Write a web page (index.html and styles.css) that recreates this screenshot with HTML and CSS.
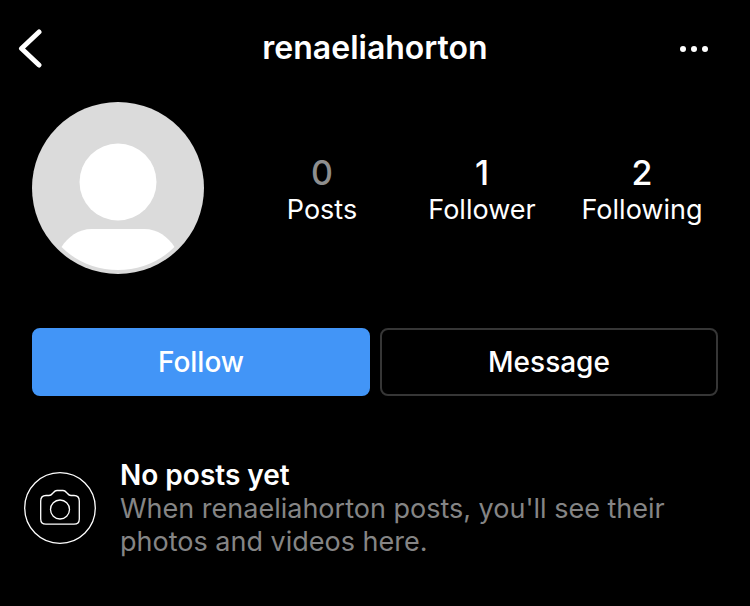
FILE: index.html
```html
<!DOCTYPE html>
<html lang="en">
<head>
  <meta charset="UTF-8" />
  <meta name="viewport" content="width=device-width, initial-scale=1" />
  <title>renaeliahorton</title>
  <link rel="stylesheet" href="styles.css">
</head>
<body>
  <header class="topbar">
    <button type="button" class="icon-btn" aria-label="Back">
      <svg width="28" height="40" viewBox="0 0 28 40">
        <path d="M22 4L4.500 20.500l17.500 16.500" fill="none" stroke="#fff" stroke-width="5" stroke-linecap="round" stroke-linejoin="round"/>
      </svg>
    </button>
    <h1 class="username">renaeliahorton</h1>
    <button type="button" class="icon-btn more" aria-label="More options">
      <svg width="30" height="10" viewBox="0 0 30 10">
        <g fill="#fff">
          <circle cx="4" cy="6" r="3"/>
          <circle cx="15" cy="6" r="3"/>
          <circle cx="26" cy="6" r="3"/>
        </g>
      </svg>
    </button>
  </header>

  <main>
    <section class="profile">
      <svg class="avatar" viewBox="0 0 172 172" role="img" aria-label="Profile picture">
        <circle cx="86" cy="86" r="86" fill="#dbdbdb"/>
        <circle cx="86" cy="80" r="38.5" fill="#fff"/>
        <path d="M29.5 145C36 135 46 127 60 127H112C126 127 136 135 142.5 145C127 160.5 107 168 86 168S45 160.5 29.5 145Z" fill="#fff"/>
      </svg>
      <div class="stats">
        <a href="#" class="stat">
          <span class="count empty">0</span>
          <span class="label">Posts</span>
        </a>
        <a href="#" class="stat">
          <span class="count">1</span>
          <span class="label">Follower</span>
        </a>
        <a href="#" class="stat">
          <span class="count">2</span>
          <span class="label">Following</span>
        </a>
      </div>
    </section>

    <div class="actions">
      <button type="button" class="btn follow">Follow</button>
      <button type="button" class="btn message">Message</button>
    </div>

    <section class="no-posts">
      <svg class="camera" viewBox="0 0 72 72" fill="none" stroke="#fff" stroke-width="1.3">
        <circle cx="36" cy="36" r="35.3"/>
        <path d="M22 23.5H25Q27 23.5 28.5 21.5L29.5 20.5Q31 18.5 33 18.5H39Q41 18.5 42.5 20.5L43.5 21.5Q45 23.5 47 23.5H50Q55.3 23.5 55.3 29V47Q55.3 52.2 50 52.2H22Q16.7 52.2 16.7 47V29Q16.7 23.5 22 23.5Z"/>
        <circle cx="36" cy="37.5" r="9.5"/>
      </svg>
      <div class="no-posts-text">
        <h2>No posts yet</h2>
        <p>When renaeliahorton posts, you'll see their photos and videos here.</p>
      </div>
    </section>
  </main>
</body>
</html>
```

FILE: styles.css
```css
body {
  margin: 0;
  background-color: #000;
  color: #fff;
  font-family: Inter, "Liberation Sans", sans-serif;
  font-size: 27px;
}
button {
  font-family: inherit;
  cursor: pointer;
}
.topbar {
  display: grid;
  grid-template-columns: 60px 1fr 60px;
  align-items: center;
  height: 96px;
  padding: 0 17px;
}
.icon-btn {
  display: flex;
  padding: 0;
  border: none;
  background: none;
}
.more {
  justify-content: flex-end;
  padding: 16px 24px 16px 0;
}
.username {
  margin: 0;
  font-size: 32px;
  font-weight: 600;
  line-height: 40px;
  text-align: center;
}
.profile {
  display: flex;
  align-items: center;
  gap: 38px;
  padding: 6px 28px 0 32px;
}
.avatar {
  flex: none;
  width: 172px;
  height: 172px;
}
.stats {
  flex: 1;
  display: grid;
  grid-template-columns: repeat(3, 1fr);
  padding-top: 4px;
}
.stat {
  display: flex;
  flex-direction: column;
  align-items: center;
  color: #fff;
  text-decoration: none;
}
.count {
  font-size: 34px;
  font-weight: 500;
  line-height: 40px;
}
.empty {
  color: #8e8e8e;
}
.label {
  line-height: 34px;
}
.actions {
  display: grid;
  grid-template-columns: 1fr 1fr;
  gap: 10px;
  padding: 54px 32px 0;
}
.btn {
  height: 68px;
  border: 2px solid #363636;
  border-radius: 8px;
  background: none;
  color: #fff;
  font-size: 28px;
  font-weight: 500;
}
.follow {
  border-color: #4295f7;
  background-color: #4295f7;
}
.no-posts {
  display: flex;
  align-items: center;
  gap: 24px;
  padding: 62px 60px 40px 24px;
}
.camera {
  flex: none;
  width: 72px;
  height: 72px;
}
.no-posts-text h2 {
  margin: 0;
  font-size: 28px;
  font-weight: 600;
  line-height: 34px;
}
.no-posts-text p {
  margin: 0;
  color: #858585;
  line-height: 33px;
}
```
